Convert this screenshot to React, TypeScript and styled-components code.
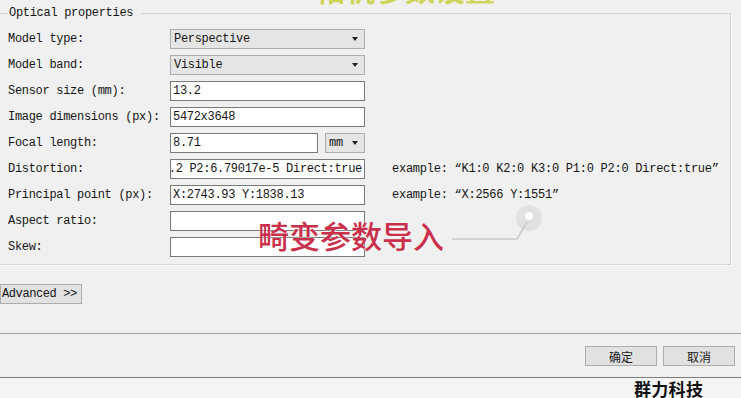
import React from "react";
import styled, { createGlobalStyle } from "styled-components";

const GlobalStyle = createGlobalStyle`
  html, body { margin: 0; padding: 0; }
  body {
    width: 741px;
    height: 398px;
    overflow: hidden;
    background: #f0f0f0;
    font-family: "Liberation Mono", "Noto Sans CJK SC", monospace;
    font-size: 12px;
    color: #151515;
  }
`;

const Page = styled.div`
  position: relative;
  width: 741px;
  height: 398px;
  display: flex;
  flex-direction: column;
  overflow: hidden;
`;

const Main = styled.div`
  height: 333px;
  box-sizing: border-box;
  padding-top: 6px;
  display: flex;
  flex-direction: column;
  align-items: flex-start;
`;

const GroupBox = styled.fieldset`
  align-self: stretch;
  margin: 0 10px 0 -6px;
  padding: 9px 0 7px 13px;
  border: 1px solid #d4d4d4;
  box-shadow: 1px 1px 0 #fafafa;
  min-width: 0;
`;

const GroupTitle = styled.legend`
  padding: 0 8px 0 1px;
  margin-left: 0;
  line-height: 14px;
  letter-spacing: -0.3px;
`;

const Rows = styled.div`
  display: flex;
  flex-direction: column;
  gap: 6px;
`;

const Row = styled.div`
  display: grid;
  grid-template-columns: 162px 195px 1fr;
  align-items: center;
  height: 20px;
`;

const Label = styled.span`
  white-space: nowrap;
  letter-spacing: -0.3px;
`;

const Example = styled.span`
  padding-left: 27px;
  white-space: nowrap;
  letter-spacing: -0.25px;
`;

const TextBox = styled.div<{ $width?: number; $end?: boolean }>`
  box-sizing: border-box;
  height: 20px;
  width: ${(p) => (p.$width ? `${p.$width}px` : "100%")};
  border: 1px solid #7a7a7a;
  background: #fff;
  padding: 0 2px;
  display: flex;
  align-items: center;
  justify-content: ${(p) => (p.$end ? "flex-end" : "flex-start")};
  overflow: hidden;
  white-space: nowrap;
  letter-spacing: -0.3px;
`;

const Combo = styled.div<{ $width?: number }>`
  box-sizing: border-box;
  height: 20px;
  width: ${(p) => (p.$width ? `${p.$width}px` : "100%")};
  border: 1px solid #adadad;
  background: #e5e5e5;
  padding: 0 6px 0 3px;
  display: flex;
  align-items: center;
  justify-content: space-between;
  white-space: nowrap;
  letter-spacing: -0.3px;
`;

const Arrow = styled.span`
  width: 0;
  height: 0;
  border-left: 3.5px solid transparent;
  border-right: 3.5px solid transparent;
  border-top: 4px solid #222;
`;

const FieldPair = styled.div`
  display: flex;
  gap: 7px;
`;

const AdvancedButton = styled.div`
  margin-top: 19px;
  box-sizing: border-box;
  width: 82px;
  height: 20px;
  border: 1px solid #adadad;
  background: #e1e1e1;
  padding-left: 1px;
  display: flex;
  align-items: center;
  white-space: nowrap;
  letter-spacing: -0.4px;
`;

const Divider = styled.div<{ $color: string }>`
  height: 1px;
  background: ${(p) => p.$color};
  flex: none;
`;

const ButtonBar = styled.div`
  display: flex;
  justify-content: flex-end;
  gap: 6px;
  padding: 12px 6px 11px 0;
`;

const DialogButton = styled.div`
  box-sizing: border-box;
  width: 72px;
  height: 20px;
  border: 1px solid #adadad;
  background: #e1e1e1;
  display: flex;
  align-items: center;
  justify-content: center;
  font-family: "Noto Sans CJK SC", sans-serif;
  font-size: 12px;
  color: #1a1a1a;
`;

const Footer = styled.div`
  flex: 1;
  background: #f4f4f4;
  display: flex;
  align-items: center;
  padding-left: 634px;
`;

const Brand = styled.span`
  font-family: "Noto Sans CJK SC", sans-serif;
  font-weight: 700;
  font-size: 17px;
  line-height: 19px;
  color: #111;
  letter-spacing: 0.3px;
`;

const Caption = styled.div`
  position: absolute;
  left: 258px;
  top: 218px;
  font-family: "Noto Sans CJK SC", sans-serif;
  font-weight: 500;
  font-size: 31px;
  line-height: 34px;
  color: #c9304b;
  text-shadow: 0 0 2px rgba(255, 255, 255, 0.8);
  white-space: nowrap;
`;

const TopCaption = styled.div`
  position: absolute;
  left: 315px;
  top: -27px;
  font-family: "Noto Sans CJK SC", sans-serif;
  font-weight: 700;
  font-size: 30px;
  line-height: 30px;
  color: #cdd55a;
  filter: blur(0.6px);
  white-space: nowrap;
`;

const Pointer = styled.svg`
  position: absolute;
  left: 448px;
  top: 200px;
  overflow: visible;
`;

export default function App() {
  return (
    <Page>
      <GlobalStyle />
      <Main>
        <GroupBox>
          <GroupTitle>Optical properties</GroupTitle>
          <Rows>
            <Row>
              <Label>Model type:</Label>
              <Combo>
                Perspective
                <Arrow />
              </Combo>
            </Row>
            <Row>
              <Label>Model band:</Label>
              <Combo>
                Visible
                <Arrow />
              </Combo>
            </Row>
            <Row>
              <Label>Sensor size (mm):</Label>
              <TextBox>13.2</TextBox>
            </Row>
            <Row>
              <Label>Image dimensions (px):</Label>
              <TextBox>5472x3648</TextBox>
            </Row>
            <Row>
              <Label>Focal length:</Label>
              <FieldPair>
                <TextBox $width={148}>8.71</TextBox>
                <Combo $width={40}>
                  mm
                  <Arrow />
                </Combo>
              </FieldPair>
            </Row>
            <Row>
              <Label>Distortion:</Label>
              <TextBox $end>-3.2 P2:6.79017e-5 Direct:true</TextBox>
              <Example>example: “K1:0 K2:0 K3:0 P1:0 P2:0 Direct:true”</Example>
            </Row>
            <Row>
              <Label>Principal point (px):</Label>
              <TextBox>X:2743.93 Y:1838.13</TextBox>
              <Example>example: “X:2566 Y:1551”</Example>
            </Row>
            <Row>
              <Label>Aspect ratio:</Label>
              <TextBox />
            </Row>
            <Row>
              <Label>Skew:</Label>
              <TextBox />
            </Row>
          </Rows>
        </GroupBox>
        <AdvancedButton>Advanced &gt;&gt;</AdvancedButton>
      </Main>
      <Divider $color="#a3a3a3" />
      <ButtonBar>
        <DialogButton>确定</DialogButton>
        <DialogButton>取消</DialogButton>
      </ButtonBar>
      <Divider $color="#7c7c7c" />
      <Footer>
        <Brand>群力科技</Brand>
      </Footer>

      <TopCaption>相机参数设置</TopCaption>
      <Caption>畸变参数导入</Caption>
      <Pointer width="100" height="50" viewBox="0 0 100 50">
        <circle cx="81" cy="18" r="13" fill="#dedede" opacity="0.85" />
        <circle cx="81" cy="16" r="4" fill="#ffffff" />
        <polyline points="4,39 69,39 79,22" fill="none" stroke="#c9c9c9" strokeWidth="1.5" />
      </Pointer>
    </Page>
  );
}
